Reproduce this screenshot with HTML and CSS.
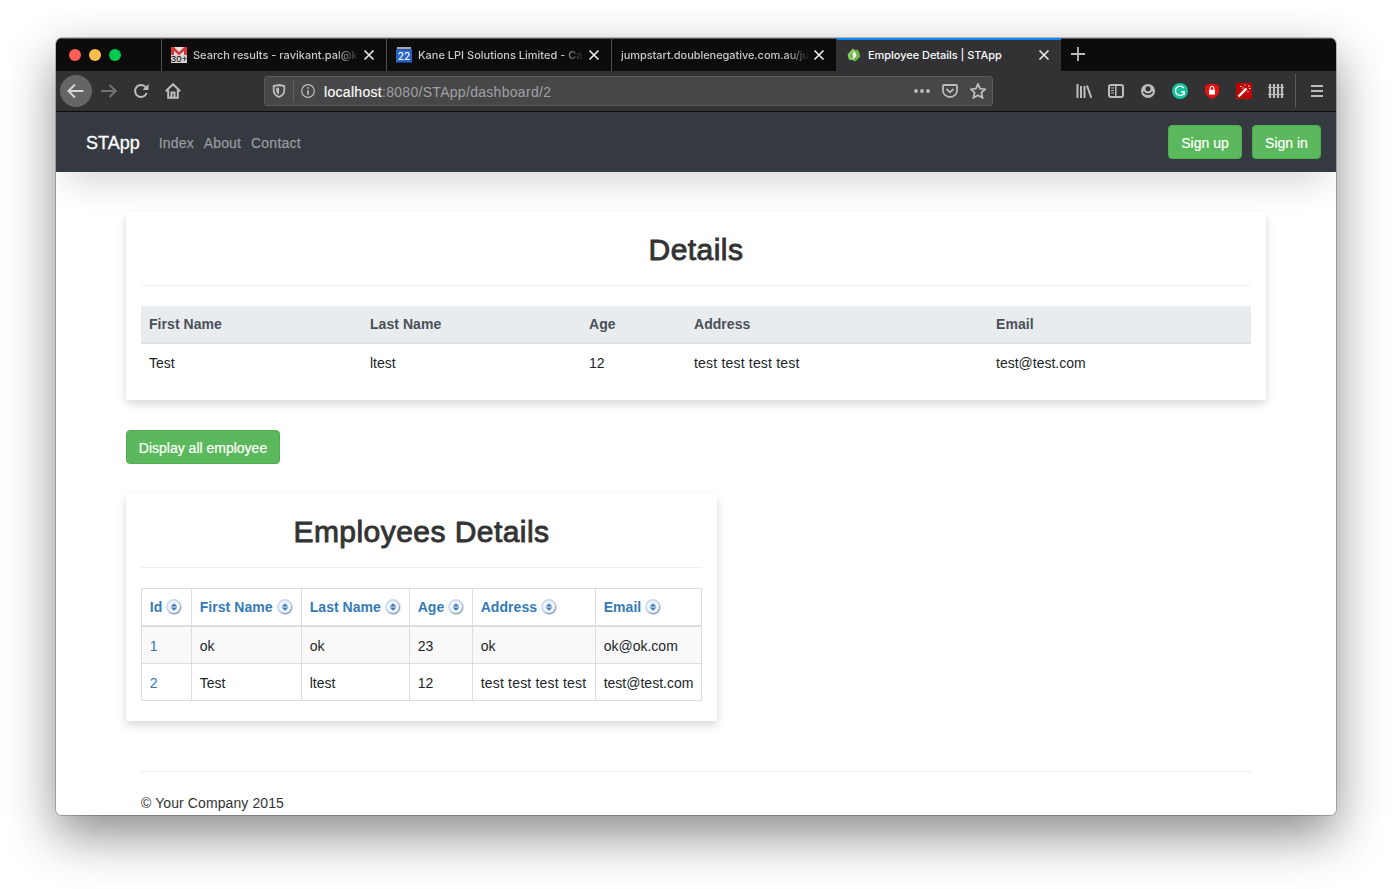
FILE: index.html
```html
<!DOCTYPE html>
<html lang="en">
<head>
<meta charset="utf-8">
<title>Employee Details | STApp</title>
<link rel="stylesheet" href="styles.css">
</head>
<body>
<div class="window">
  <div class="tabbar">
    <div class="lights"><i class="red"></i><i class="yellow"></i><i class="green"></i></div>
    <div class="tab">
      <svg class="fav" width="16" height="16" viewBox="0 0 16 16"><rect width="16" height="16" rx="1" fill="#e8e3e1"/><path d="M0 0H3L8 5 13 0H16V9H13V4L8 8.500 3 4V9H0Z" fill="#d5383b"/><rect y="8" width="16" height="8" fill="#d5d1cf"/><text x="-.2" y="15.300" font-size="9.500" textLength="16.400" font-family="Liberation Sans, sans-serif" fill="#000">30+</text></svg>
      <span class="tab-title t1">Search results - ravikant.pal@k</span>
      <svg class="close" width="12" height="12" viewBox="0 0 12 12"><path d="M1.500 1.500 10.500 10.500M10.500 1.500 1.500 10.500"/></svg>
    </div>
    <div class="tab">
      <svg class="fav" width="16" height="16" viewBox="0 0 16 16"><path d="M1 0H15V3H1Z" fill="#a9aaad"/><path d="M0 2H16V15.500H0Z" fill="#2b63c6"/><path d="M0 2H16V3H0Z" fill="#1d4fa9"/><text x="8" y="12.600" text-anchor="middle" font-size="10" font-family="Inter, sans-serif" font-weight="500" fill="#fff">22</text></svg>
      <span class="tab-title t2">Kane LPI Solutions Limited - Ca</span>
      <svg class="close" width="12" height="12" viewBox="0 0 12 12"><path d="M1.500 1.500 10.500 10.500M10.500 1.500 1.500 10.500"/></svg>
    </div>
    <div class="tab">
      <span class="tab-title t3">jumpstart.doublenegative.com.au/ju</span>
      <svg class="close" width="12" height="12" viewBox="0 0 12 12"><path d="M1.500 1.500 10.500 10.500M10.500 1.500 1.500 10.500"/></svg>
    </div>
    <div class="tab active">
      <svg class="fav" width="16" height="16" viewBox="0 0 16 16"><path d="M7 1.500 9 3 11 2.500 13 4.500 14.300 9.500 12 12 9 14.500 6 13 3 12.500 1.700 7.500Z" fill="#6fb544"/><path d="M1.700 7.500 7 1.500 7.500 4 4.500 8 6 13 3 12.500Z" fill="#8bca62"/><path d="M8 3.500C8.500 6 11 6.500 10.300 8.500 9.500 10.500 8 11 6.500 13 6 11 8 9.800 6.800 8.500 6 7 7.500 5.500 8 3.500Z" fill="#fff"/></svg>
      <span class="tab-title t4">Employee Details | STApp</span>
      <svg class="close" width="12" height="12" viewBox="0 0 12 12"><path d="M1.500 1.500 10.500 10.500M10.500 1.500 1.500 10.500"/></svg>
    </div>
    <svg class="plus" width="14" height="14" viewBox="0 0 14 14"><path d="M7 0V14M0 7H14"/></svg>
  </div>

  <div class="toolbar">
    <div class="back"><svg class="ic" width="18" height="16" viewBox="0 0 18 16"><path d="M16.500 8H2M8 1.500 1.500 8 8 14.500"/></svg></div>
    <svg class="ic fwd" width="16" height="16" viewBox="0 0 16 16"><path d="M0 8H14M8.500 2 14.800 8 8.500 14"/></svg>
    <svg class="ic reload" width="16" height="16" viewBox="0 0 16 16"><path d="M12.800 4.300A6 6 0 1 0 13.700 10"/><path d="M15.500 1V7H9.500Z" class="solid"/></svg>
    <svg class="ic home" width="16" height="16" viewBox="0 0 16 16"><path d="M.8 8.300 8 1.200 15.200 8.300M3.200 7V14.800H12.800V7M6.500 14.500V9.500H9.500V14.500"/></svg>
    <div class="urlbar">
      <svg class="ic" width="14" height="14" viewBox="0 0 14 14"><path d="M7 1 12.300 2V6.500C12.300 10 9.500 12 7 13 4.500 12 1.700 10 1.700 6.500V2Z"/><path d="M7 3.500V10.500C5.300 9.500 4.200 8.500 4.200 6.500V4Z" class="solid"/></svg>
      <span class="bar"></span>
      <svg class="ic info" width="14" height="14" viewBox="0 0 14 14"><circle cx="7" cy="7" r="6.300"/><path d="M7 6.200V10.800M7 3.200V4.800" stroke-width="1.700"/></svg>
      <span class="url"><b>localhost</b>:8080/STApp/dashboard/2</span>
      <svg class="ic dots" width="16" height="16" viewBox="0 0 16 16"><g class="solid"><circle cx="2" cy="8" r="1.900"/><circle cx="8" cy="8" r="1.900"/><circle cx="14" cy="8" r="1.900"/></g></svg>
      <svg class="ic" width="16" height="16" viewBox="0 0 16 16"><path d="M2 2H14Q15 2 15 3V7.500A7 6.500 0 0 1 1 7.500V3Q1 2 2 2ZM4.500 6 8 9.300 11.500 6"/></svg>
      <svg class="ic star" width="16" height="16" viewBox="0 0 16 16"><path d="M8 1 10.100 5.600 15.200 6.200 11.400 9.600 12.500 14.800 8 12.200 3.500 14.800 4.600 9.600 .8 6.200 5.900 5.600Z"/></svg>
    </div>
    <div class="tools">
      <svg class="ic" width="16" height="16" viewBox="0 0 16 16"><path d="M1.500 1V15M5 3V15M8.500 3V15M11 2.500 15.300 14.800"/></svg>
      <svg class="ic" width="16" height="16" viewBox="0 0 16 16"><rect x="1" y="2" width="14" height="12" rx="2"/><path d="M7.800 2V14" stroke-width="1.500"/><path d="M3 5H6M3 7.500H6M3 10H6" stroke-width="1.200"/></svg>
      <svg width="16" height="16" viewBox="0 0 16 16"><circle cx="8" cy="8" r="7" fill="#bcbcbd"/><circle cx="8" cy="5.800" r="2.500" fill="#323234"/><path d="M3.600 8.600C4.500 12 11.500 12 12.400 8.600" fill="none" stroke="#323234" stroke-width="1.500"/></svg>
      <svg width="16" height="16" viewBox="0 0 16 16"><circle cx="8" cy="8" r="8" fill="#15c39a"/><path d="M11.700 5A4.600 4.600 0 1 0 12.400 9.200M9 8.800H12.300V12" fill="none" stroke="#fff" stroke-width="1.400"/></svg>
      <svg width="16" height="16" viewBox="0 0 16 16"><path d="M8 .5 15 2.200V7.500C15 11.500 12 14.300 8 15.800 4 14.300 1 11.500 1 7.500V2.200Z" fill="#e9100f"/><rect x="5" y="6.800" width="6" height="4.800" fill="#fff"/><path d="M6.200 7V5.300A1.800 1.800 0 0 1 9.800 5.300V7" fill="none" stroke="#fff" stroke-width="1.200"/></svg>
      <svg width="16" height="16" viewBox="0 0 16 16"><rect width="16" height="16" fill="#c20404"/><path d="M2.500 13.500 10.500 5.500" stroke="#fff" stroke-width="2.400"/><path d="M4 3.500H5.500M6.500 5H8M8.500 2H9.500M12 3H13.500M13 5.500H14.500M11.500 8.500H12.500" stroke="#fff" stroke-width="1"/></svg>
      <svg class="ic" width="16" height="16" viewBox="0 0 16 16"><path d="M2 1V15M6 1V15M10 1V15M14 1V15" stroke-width="2.200"/><path d="M0 4.500H16M0 11.500H16" stroke-width="1.200"/></svg>
    </div>
    <span class="divider"></span>
    <svg class="ic menu" width="12" height="12" viewBox="0 0 12 12"><path d="M0 1H12M0 6H12M0 11H12"/></svg>
  </div>

  <div class="page">
    <nav class="navbar">
      <a class="brand">STApp</a>
      <a class="link">Index</a><a class="link">About</a><a class="link contact">Contact</a>
      <span class="btn up">Sign up</span>
      <span class="btn in">Sign in</span>
    </nav>
    <main class="content">
      <section class="card">
        <h2>Details</h2>
        <table class="detail">
          <colgroup><col class="d1"><col class="d2"><col class="d3"><col class="d4"><col class="d5"></colgroup>
          <thead><tr><th>First Name</th><th>Last Name</th><th>Age</th><th>Address</th><th>Email</th></tr></thead>
          <tbody><tr><td>Test</td><td>ltest</td><td>12</td><td class="addr">test test test test</td><td>test@test.com</td></tr></tbody>
        </table>
      </section>
      <span class="btn show">Display all employee</span>
      <section class="card narrow">
        <h2>Employees Details</h2>
        <svg width="0" height="0" class="defs"><defs>
          <symbol id="sort" viewBox="0 0 16 16"><circle cx="8" cy="8" r="7.900" fill="#c4daf2"/><circle cx="8.500" cy="8.600" r="6.500" fill="#8e9eb2"/><circle cx="7.900" cy="7.900" r="6.200" fill="#f1f4f8"/><path d="M8 4.300 11.300 7.400H4.700ZM8 11.700 4.700 8.600H11.300Z" fill="#3c78bd"/></symbol>
        </defs></svg>
        <table class="grid">
          <colgroup><col class="g1"><col class="g2"><col class="g3"><col class="g4"><col class="g5"><col class="g6"></colgroup>
          <thead><tr>
            <th>Id<svg><use href="#sort"/></svg></th>
            <th>First Name<svg><use href="#sort"/></svg></th>
            <th>Last Name<svg><use href="#sort"/></svg></th>
            <th>Age<svg><use href="#sort"/></svg></th>
            <th>Address<svg><use href="#sort"/></svg></th>
            <th>Email<svg><use href="#sort"/></svg></th>
          </tr></thead>
          <tbody>
            <tr class="odd"><td><a>1</a></td><td>ok</td><td>ok</td><td>23</td><td>ok</td><td>ok@ok.com</td></tr>
            <tr><td><a>2</a></td><td>Test</td><td>ltest</td><td>12</td><td class="addr">test test test test</td><td>test@test.com</td></tr>
          </tbody>
        </table>
      </section>
      <footer>© Your Company 2015</footer>
    </main>
  </div>
</div>
</body>
</html>
```
FILE: styles.css
```css
* { box-sizing: border-box; }
html, body { height: 100%; }
body {
  margin: 0;
  padding: 38px 56px 0;
  background: #fff;
  overflow: hidden;
  font: 14px/20px "Liberation Sans", Arial, sans-serif;
  color: #212529;
}
svg { display: block; flex: none; }
.window {
  width: 1280px;
  height: 777px;
  border-radius: 6px;
  overflow: hidden;
  background: #fff;
  display: flex;
  flex-direction: column;
  box-shadow: 0 0 0 1px rgba(0,0,0,.22), 0 20px 50px rgba(0,0,0,.46);
}

/* tabs */
.tabbar {
  height: 33px;
  flex: none;
  display: flex;
  background: #0c0c0d;
  border-top: 1px solid #5a5a5a;
}
.lights { width: 105px; display: flex; gap: 8px; align-items: center; padding-left: 13px; }
.lights i { width: 12px; height: 12px; border-radius: 50%; }
.red { background: #ff5f57; }
.yellow { background: #ffbd4c; }
.green { background: #00cb4e; }
.tab {
  width: 225px;
  display: flex;
  align-items: center;
  padding: 0 11px 0 9px;
  border-left: 1px solid #515153;
  color: #c9c9ca;
  font: 500 11px/16px Inter, sans-serif;
}
.fav { margin-right: 6px; }
.tab-title {
  flex: 1;
  min-width: 0;
  overflow: hidden;
  white-space: nowrap;
  margin-right: 3px;
  mask-image: linear-gradient(to left, transparent, #000 24px);
}
.t1 { letter-spacing: 0; }
.t3 { letter-spacing: -.06px; }
.t4 { letter-spacing: -.04px; }
.close { stroke: #ededee; stroke-width: 1.6; fill: none; }
.tab.active {
  margin-top: -1px;
  border-left: 1px solid #323234;
  border-top: 2px solid #0a84ff;
  background: #323234;
  color: #f9f9fa;
}
.tab.active .tab-title { mask-image: none; }
.tab.active > * { margin-bottom: 1px; }
.plus { margin: 8px 0 0 10px; stroke: #bcbcbd; stroke-width: 1.8; fill: none; }

/* toolbar */
.toolbar {
  height: 41px;
  flex: none;
  display: flex;
  align-items: center;
  background: #323234;
  border-bottom: 1px solid #0c0c0d;
}
.ic { fill: none; stroke: #bcbcbd; stroke-width: 2; }
.ic .solid { fill: #bcbcbd; stroke: none; }
.back {
  width: 32px; height: 32px;
  margin-left: 4px;
  border-radius: 50%;
  background: #656567;
  display: grid;
  place-items: center;
}
.back .ic { stroke: #d5d5d6; }
.fwd { margin-left: 9px; stroke: #727274; }
.reload { margin-left: 16px; }
.home { margin-left: 16px; }
.urlbar {
  width: 729px; height: 30px;
  margin-left: 83px;
  padding: 0 6px 0 7px;
  display: flex;
  align-items: center;
  background: #474749;
  border: 1px solid #5b5b5d;
  border-radius: 3px;
}
.urlbar .ic { stroke-width: 1.8; }
.urlbar .info { stroke-width: 1.2; }
.bar { width: 1px; height: 22px; background: #616163; margin: 0 7px; }
.url { flex: 1; margin-left: 9px; padding-top: 2px; color: #a0a0a2; font-size: 14px; letter-spacing: .3px; }
.url b { font-weight: 400; color: #f9f9fa; -webkit-text-stroke: .2px #f9f9fa; }
.urlbar .dots { margin-right: 12px; }
.urlbar .star { margin-left: 12px; }
.tools { margin-left: 83px; display: flex; gap: 16px; }
.divider { width: 1px; height: 34px; background: #59595b; margin: 0 15px 0 11px; }

/* web page */
.page { flex: 1; min-height: 0; overflow: hidden; background: #fff; }
.navbar {
  height: 60px;
  background: #343a40;
  display: flex;
  align-items: center;
  padding: 2px 15px 0 30px;
  color: #fff;
  box-shadow: 0 22px 32px -10px rgba(0,0,0,.15);
}
.brand { font-size: 18px; margin-right: 19px; -webkit-text-stroke: .3px #fff; }
.link { margin-right: 9.800px; color: #98999c; letter-spacing: .18px; -webkit-text-stroke: .25px #98999c; }
.contact { letter-spacing: .26px; }
.btn {
  height: 34px;
  display: flex;
  justify-content: center;
  align-items: center;
  padding-top: 2px;
  background: #5cb85c;
  border: 1px solid #4cae4c;
  border-radius: 4px;
  color: #fff;
  white-space: nowrap;
  -webkit-text-stroke: .2px #fff;
}
.navbar .btn { margin-top: -2px; }
.up { width: 74px; margin-left: auto; margin-right: 10px; }
.in { width: 69px; }
.content { padding: 40px 70px 0; }
.card {
  height: 188px;
  padding: 20px 15px 0;
  border-radius: 3px;
  background: #fff;
  box-shadow: 0 4px 10px rgba(0,0,0,.16);
}
.card.narrow { width: 591px; height: 227px; margin-top: 30px; }
.show { width: 154px; margin-top: 30px; }
h2 {
  margin: 0 0 20px;
  height: 54px;
  padding-top: 1px;
  border-bottom: 1px solid #eee;
  text-align: center;
  font-size: 30px;
  line-height: 33px;
  font-weight: 400;
  color: #333;
  letter-spacing: .45px;
  -webkit-text-stroke: .9px #333;
}
.defs { position: absolute; }
table { border-collapse: separate; border-spacing: 0; table-layout: fixed; }
th, td { text-align: left; padding: 2px 8px 0; font-size: 14px; line-height: 20px; white-space: nowrap; }
.detail { width: 1110px; }
.d1 { width: 221px; } .d2 { width: 219px; } .d3 { width: 105px; } .d4 { width: 302px; } .d5 { width: 263px; }
.detail th { height: 38px; padding-top: 0; padding-bottom: 1px; background: #e9ecef; color: #495057; border-bottom: 2px solid #dee2e6; letter-spacing: .05px; }
.detail td { height: 37px; padding-top: 0; }
.grid { width: 561px; border-left: 1px solid #ddd; border-top: 1px solid #ddd; }
.g1 { width: 50px; } .g2 { width: 110px; } .g3 { width: 108px; } .g4 { width: 63px; } .g5 { width: 123px; } .g6 { width: 106px; }
.grid th, .grid td { border-right: 1px solid #ddd; border-bottom: 1px solid #ddd; }
.grid th { height: 38px; padding: 0 0 1px 7.700px; border-bottom-width: 2px; color: #337ab7; letter-spacing: .05px; }
.grid th svg { display: inline-block; width: 16px; height: 16px; margin-left: 4px; vertical-align: -3px; margin-top: -1px; }
.grid td { height: 37px; padding-left: 7.700px; }
td.addr { letter-spacing: .19px; }
.odd td { background: #f9f9f9; }
.grid a { color: #337ab7; }
footer { margin: 50px 15px 0; border-top: 1px solid #eee; padding-top: 21px; color: #333; letter-spacing: .1px; }
```
